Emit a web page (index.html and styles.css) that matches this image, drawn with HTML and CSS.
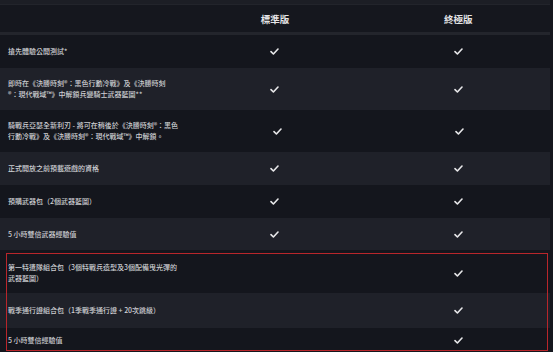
FILE: index.html
```html
<!DOCTYPE html>
<html lang="zh-Hant">
<head>
<meta charset="utf-8">
<link rel="stylesheet" href="styles.css">
</head>
<body>
<svg width="0" height="0" class="defs">
  <symbol id="chk" viewBox="0 0 9 7"><path d="M1 3.6 L3.4 6 L8 1" fill="none" stroke="currentColor" stroke-width="1.6" stroke-linecap="round" stroke-linejoin="round"/></symbol>
</svg>
<div class="table">
  <div class="topstrip"></div>
  <div class="row head">
    <div class="cell label"></div>
    <div class="cell mark">標準版</div>
    <div class="cell mark">終極版</div>
  </div>
  <div class="row dark h33">
    <div class="cell label">搶先體驗公開測試*</div>
    <div class="cell mark"><svg class="check"><use href="#chk"/></svg></div>
    <div class="cell mark"><svg class="check"><use href="#chk"/></svg></div>
  </div>
  <div class="row light h42">
    <div class="cell label">即時在《決勝時刻®：黑色行動冷戰》及《決勝時刻<br>®：現代戰域™》中解鎖兵變騎士武器藍圖**</div>
    <div class="cell mark"><svg class="check"><use href="#chk"/></svg></div>
    <div class="cell mark"><svg class="check"><use href="#chk"/></svg></div>
  </div>
  <div class="row dark h42">
    <div class="cell label">騎戰兵亞瑟全新利刃 - 將可在稍後於《決勝時刻®：黑色<br>行動冷戰》及《決勝時刻®：現代戰域™》中解鎖。</div>
    <div class="cell mark"><svg class="check"><use href="#chk"/></svg></div>
    <div class="cell mark"><svg class="check"><use href="#chk"/></svg></div>
  </div>
  <div class="row light h33">
    <div class="cell label">正式開放之前預載遊戲的資格</div>
    <div class="cell mark"><svg class="check"><use href="#chk"/></svg></div>
    <div class="cell mark"><svg class="check"><use href="#chk"/></svg></div>
  </div>
  <div class="row dark h33">
    <div class="cell label">預購武器包（2個武器藍圖）</div>
    <div class="cell mark"><svg class="check"><use href="#chk"/></svg></div>
    <div class="cell mark"><svg class="check"><use href="#chk"/></svg></div>
  </div>
  <div class="row light h32">
    <div class="cell label">5 小時雙倍武器經驗值</div>
    <div class="cell mark"><svg class="check"><use href="#chk"/></svg></div>
    <div class="cell mark"><svg class="check"><use href="#chk"/></svg></div>
  </div>
  <div class="highlight">
    <div class="row dark r7">
      <div class="cell label">第一特遣隊組合包（3個特戰兵造型及3個配備曳光彈的<br>武器藍圖）</div>
      <div class="cell mark"></div>
      <div class="cell mark"><svg class="check"><use href="#chk"/></svg></div>
    </div>
    <div class="row light r8">
      <div class="cell label">戰季通行證組合包（1季戰季通行證 + 20次跳級）</div>
      <div class="cell mark"></div>
      <div class="cell mark"><svg class="check"><use href="#chk"/></svg></div>
    </div>
    <div class="row dark r9">
      <div class="cell label">5 小時雙倍經驗值</div>
      <div class="cell mark"></div>
      <div class="cell mark"><svg class="check"><use href="#chk"/></svg></div>
    </div>
    <div class="redbox"></div>
  </div>
</div>
</body>
</html>
```
FILE: styles.css
```css
html, body {
  margin: 0;
  padding: 0;
  background: #15171e;
  width: 553px;
  height: 352px;
  overflow: hidden;
}
.defs { position: absolute; }
.table {
  width: 550px;
  font-family: "Noto Sans CJK TC", "Noto Sans", sans-serif;
  color: #cdced2;
}
.topstrip {
  height: 4px;
  background: #1c1e25;
  border-bottom: 1px solid #22242b;
}
.row {
  display: grid;
  grid-template-columns: 1fr 1fr 1fr;
  align-items: center;
  box-sizing: border-box;
}
.head {
  height: 30px;
  background: #15171e;
  border-bottom: 3px solid #23252c;
  font-weight: 700;
  font-size: 9.5px;
  color: #e4e4e6;
}
.h33 { height: 33px; }
.h42 { height: 42px; }
.h32 { height: 32px; }
.dark { background: #14161d; }
.light { background: #1f2129; }
.cell.label {
  padding: 0 8px;
  font-size: 7px;
  line-height: 11px;
  font-weight: 500;
  white-space: nowrap;
}
.cell.mark {
  display: flex;
  justify-content: center;
  align-items: center;
}
.check {
  width: 9px;
  height: 7px;
  color: #e8e8ea;
}
.highlight { position: relative; }
.r7 { height: 43px; padding-top: 3px; }
.r8 { height: 35px; }
.r9 { height: 24px; }
.redbox {
  position: absolute;
  left: 6px;
  right: 2px;
  top: 3px;
  bottom: 1px;
  border: 1.5px solid #b8262b;
  box-sizing: border-box;
}
```
